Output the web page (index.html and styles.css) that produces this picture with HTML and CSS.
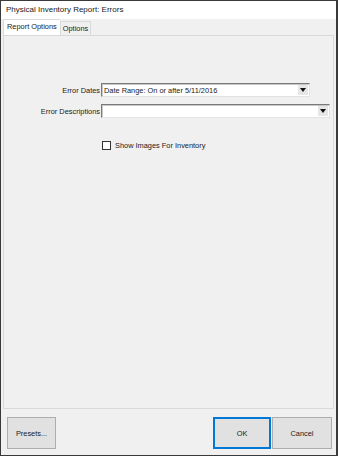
FILE: index.html
```html
<!DOCTYPE html>
<html lang="en">
<head>
  <meta charset="UTF-8" />
  <title>Physical Inventory Report: Errors</title>
  <link rel="stylesheet" href="styles.css">
</head>
<body>
  <div class="window">
    <div class="titlebar">Physical Inventory Report: Errors</div>
    <div class="tabs">
      <div class="tab active">Report Options</div>
      <div class="tab">Options</div>
    </div>
    <div class="panel">
      <div class="form">
        <label class="label">Error Dates</label>
        <div class="combo short">
          <span class="combo-text">Date Range: On or after 5/11/2016</span>
          <span class="combo-btn">
            <svg width="6" height="4" viewBox="0 0 6 4"><path d="M0 0H6L3 4Z" fill="#111"/></svg>
          </span>
        </div>
        <label class="label">Error Descriptions</label>
        <div class="combo long">
          <span class="combo-text"></span>
          <span class="combo-btn">
            <svg width="6" height="4" viewBox="0 0 6 4"><path d="M0 0H6L3 4Z" fill="#111"/></svg>
          </span>
        </div>
        <div></div>
        <label class="check">
          <span class="box"></span>
          <span>Show Images For Inventory</span>
        </label>
      </div>
    </div>
    <div class="footer">
      <button class="btn presets">Presets...</button>
      <div class="spacer"></div>
      <button class="btn ok">OK</button>
      <button class="btn cancel">Cancel</button>
    </div>
  </div>
</body>
</html>
```

FILE: styles.css
```css
* {
  box-sizing: border-box;
  margin: 0;
  padding: 0;
}
body {
  font-family: 'Liberation Sans', Arial, sans-serif;
  font-size: 7.4px;
  color: #1a1a1a;
  background: #fff;
}
.window {
  width: 338px;
  height: 456px;
  border: 1px solid #3a3a3a;
  border-right-width: 2px;
  background: #f0f0f0;
  display: flex;
  flex-direction: column;
}
.titlebar {
  height: 18px;
  background: #fff;
  font-size: 8px;
  line-height: 18px;
  padding-left: 5px;
  color: #222;
}
.tabs {
  height: 16px;
  display: flex;
  align-items: flex-end;
  padding-left: 2px;
  background: #f0f0f0;
}
.tab {
  height: 14px;
  line-height: 13px;
  padding: 0 2px;
  border: 1px solid #dadada;
  border-bottom: none;
  background: #f0f0f0;
}
.tab.active {
  height: 16px;
  line-height: 14px;
  background: #fff;
  padding: 0 3px;
  border-right: none;
}
.panel {
  flex: 1;
  margin: 0 2px;
  border: 1px solid #d9d9d9;
  background: #f0f0f0;
}
.form {
  display: grid;
  grid-template-columns: 97px 1fr;
  row-gap: 7px;
  align-items: center;
  margin-top: 47px;
}
.label {
  text-align: right;
  padding-right: 1px;
}
.combo {
  height: 14px;
  display: flex;
  align-items: center;
  background: #fff;
  border: 1px solid;
  border-color: #7a7a7a #e3e3e3 #e3e3e3 #7a7a7a;
  box-shadow: inset 1px 1px 0 #c8c8c8;
}
.combo.short {
  width: 209px;
}
.combo.long {
  width: 229px;
}
.combo-text {
  flex: 1;
  padding-left: 2px;
  white-space: nowrap;
}
.combo-btn {
  width: 10px;
  height: 10px;
  margin-right: 1px;
  background: #e6e6e6;
  display: flex;
  align-items: center;
  justify-content: center;
}
.check {
  display: flex;
  align-items: center;
  gap: 4px;
  margin-top: 16px;
  margin-left: 1px;
}
.box {
  width: 9px;
  height: 9px;
  border: 1px solid #333;
  background: #fff;
}
.footer {
  height: 46px;
  display: flex;
  align-items: flex-start;
  padding: 8px 4px 0 6px;
  gap: 1px;
}
.spacer {
  flex: 1;
}
.btn {
  height: 32px;
  font-family: inherit;
  font-size: 7.4px;
  color: #1a1a1a;
  background: #e1e1e1;
  border: 1px solid #adadad;
}
.presets {
  width: 49px;
}
.ok {
  width: 58px;
  border: 2px solid #0078d7;
}
.cancel {
  width: 60px;
}
```
